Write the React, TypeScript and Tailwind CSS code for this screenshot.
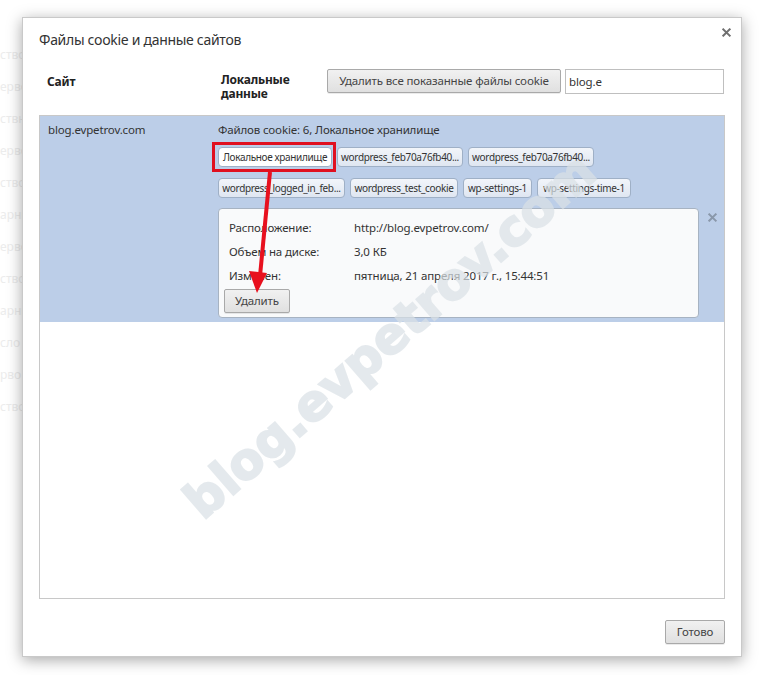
import React from 'react'

const font = { fontFamily: '"Noto Sans", "Open Sans", Arial, sans-serif' }

const chipsTop = [
  { label: 'Локальное хранилище', w: 'w-[114px]', active: true },
  { label: 'wordpress_feb70a76fb40...', w: 'w-[126px]' },
  { label: 'wordpress_feb70a76fb40...', w: 'w-[126px]' },
]

const chipsBottom = [
  { label: 'wordpress_logged_in_feb...', w: 'w-[127px]' },
  { label: 'wordpress_test_cookie', w: 'w-[108px]' },
  { label: 'wp-settings-1', w: 'w-[69px]' },
  { label: 'wp-settings-time-1', w: 'w-[94px]' },
]

function Chip({ label, w, active }: { label: string; w: string; active?: boolean }) {
  return (
    <div
      className={`${w} h-[20px] shrink-0 overflow-hidden whitespace-nowrap rounded-[4px] border border-[#9fb0c6] text-center text-[10px] leading-[18px] tracking-[-0.35px] text-[#333] ${
        active ? 'bg-white' : 'bg-gradient-to-b from-[#f2f5fa] to-[#dfe6f1]'
      }`}
    >
      {label}
    </div>
  )
}

function Cross({ className }: { className?: string }) {
  return (
    <svg viewBox="0 0 10 10" className={className}>
      <path d="M1.5 1.5 L8.5 8.5 M8.5 1.5 L1.5 8.5" strokeWidth="2.2" strokeLinecap="square" stroke="currentColor" />
    </svg>
  )
}

const btn =
  'h-[24px] rounded-[2px] border border-[#a9a9a9] bg-gradient-to-b from-[#f1f1f1] to-[#e0e0e0] text-[11.5px] leading-[22px] tracking-[-0.15px] text-[#444] shadow-[0_1px_0_rgba(0,0,0,0.08)]'

export default function App() {
  return (
    <div className="relative h-[675px] w-[764px] overflow-hidden bg-white" style={font}>
      {/* page behind the dialog */}
      <div className="flex flex-col gap-[18px] pt-[48px] text-[12px] text-[#ececec]">
        {['ство', 'ерво', 'ствн', 'ерво', 'ство', 'арнн', 'ерво', 'ство', 'арнн', 'сло', 'рво', 'ство'].map((t, i) => (
          <div key={i} className="leading-[14px]">{t}</div>
        ))}
      </div>

      {/* dialog */}
      <div className="absolute left-[22px] top-[17px] flex h-[640px] w-[720px] flex-col border border-[#c9c9c9] bg-white px-[16px] text-[11.5px] tracking-[-0.15px] shadow-[0_3px_14px_rgba(0,0,0,0.35)]">
        <button className="absolute right-[10px] top-[10px] flex h-[9px] w-[9px] items-center justify-center text-[#6f6f6f]">
          <Cross className="h-[9px] w-[9px]" />
        </button>

        <div className="pt-[12px] text-[14px] leading-[20px] tracking-[-0.3px] text-[#333]">Файлы cookie и данные сайтов</div>

        <div className="mt-[19px] flex h-[25px] items-start">
          <div className="w-[182px] pl-[8px] pt-[6px] text-[12px] font-bold leading-[14px] tracking-[-0.2px] text-[#222]">Сайт</div>
          <div className="w-[106px] pt-[4px] text-[12px] font-bold leading-[14px] tracking-[-0.2px] text-[#222]">
            Локальные
            <br />
            данные
          </div>
          <button className={`${btn} w-[234px]`}>Удалить все показанные файлы cookie</button>
          <div className="ml-[4px] flex h-[25px] w-[159px] items-center border border-[#bfbfbf] bg-white px-[3px] text-[#333]">
            blog.e
          </div>
        </div>

        <div className="mt-[21px] flex h-[484px] flex-col border border-[#c8c8c8]">
          <div className="flex bg-[#bccee8] pb-[4px]">
            <div className="w-[178px] pl-[8px] pt-[7px] leading-[14px] text-[#333]">blog.evpetrov.com</div>
            <div className="flex flex-col pt-[7px]">
              <div className="leading-[14px] text-[#333]">Файлов cookie: 6, Локальное хранилище</div>
              <div className="mt-[10px] flex gap-[5px]">
                {chipsTop.map((c, i) => (
                  <Chip key={i} {...c} />
                ))}
              </div>
              <div className="mt-[11px] flex gap-[5px]">
                {chipsBottom.map((c, i) => (
                  <Chip key={i} {...c} />
                ))}
              </div>
              <div className="mt-[10px] flex items-start">
                <div className="h-[110px] w-[481px] rounded-[4px] border border-[#a7b3c2] bg-[#f9fafb] pl-[5px] pt-[7px] text-[#333]">
                  <div className="flex h-[24px] items-center pl-[5px]">
                    <div className="w-[125px]">Расположение:</div>
                    <div>http://blog.evpetrov.com/</div>
                  </div>
                  <div className="flex h-[24px] items-center pl-[5px]">
                    <div className="w-[125px]">Объем на диске:</div>
                    <div>3,0 КБ</div>
                  </div>
                  <div className="flex h-[24px] items-center pl-[5px]">
                    <div className="w-[125px]">Изменен:</div>
                    <div>пятница, 21 апреля 2017 г., 15:44:51</div>
                  </div>
                  <button className={`${btn} mt-[1px] w-[66px]`}>Удалить</button>
                </div>
                <Cross className="ml-[9px] mt-[5px] h-[9px] w-[9px] text-[#8a98aa]" />
              </div>
            </div>
          </div>
        </div>

        <div className="mt-[21px] flex justify-end">
          <button className={`${btn} w-[60px]`}>Готово</button>
        </div>
      </div>

      {/* annotation */}
      <svg className="pointer-events-none absolute left-0 top-0" width="764" height="675">
        <rect x="213.5" y="143.5" width="121" height="27" fill="none" stroke="#e0101f" strokeWidth="3" />
        <line x1="270" y1="172" x2="260" y2="276" stroke="#e8101e" strokeWidth="4" />
        <polygon points="249,271 267,273 257,293" fill="#e8101e" />
      </svg>

      {/* watermark */}
      <div
        className="pointer-events-none absolute left-[390px] top-[336px] -translate-x-1/2 -translate-y-1/2 -rotate-[41deg] whitespace-nowrap text-[50px] font-bold leading-none text-[#dae1e6] opacity-70 [-webkit-text-stroke:2px_#dae1e6]"
        style={{ fontFamily: '"DejaVu Sans", Arial, sans-serif' }}
      >
        blog.evpetrov.com
      </div>
    </div>
  )
}
